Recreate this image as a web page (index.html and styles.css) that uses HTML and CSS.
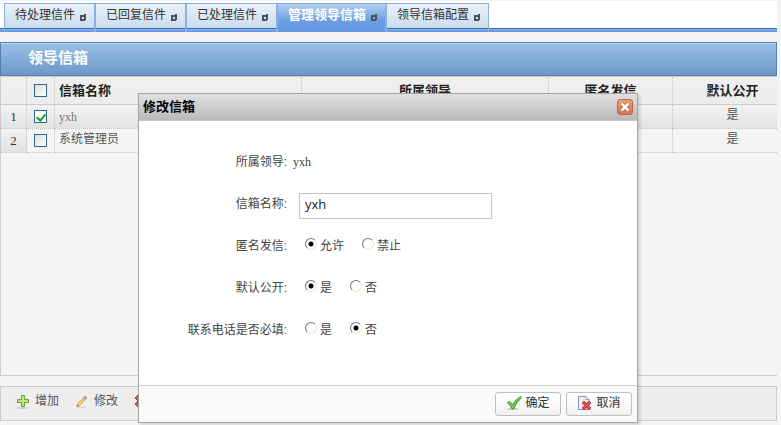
FILE: index.html
```
<!DOCTYPE html>
<html lang="zh-CN">
<head>
	<meta charset="utf-8">
	<title>领导信箱</title>
	<link rel="stylesheet" href="styles.css">
</head>
<body>
<div class="page">
	<nav class="tabs">
		<a href="#" class="tab">待处理信件<svg class="pin" viewBox="0 0 6 7"><path fill-rule="evenodd" d="M0 1h4V0h2v6H5v1H0zM2 3v2h2V3z"/></svg></a>
		<a href="#" class="tab">已回复信件<svg class="pin" viewBox="0 0 6 7"><path fill-rule="evenodd" d="M0 1h4V0h2v6H5v1H0zM2 3v2h2V3z"/></svg></a>
		<a href="#" class="tab">已处理信件<svg class="pin" viewBox="0 0 6 7"><path fill-rule="evenodd" d="M0 1h4V0h2v6H5v1H0zM2 3v2h2V3z"/></svg></a>
		<a href="#" class="tab active">管理领导信箱<svg class="pin" viewBox="0 0 6 7"><path fill-rule="evenodd" d="M0 1h4V0h2v6H5v1H0zM2 3v2h2V3z"/></svg></a>
		<a href="#" class="tab">领导信箱配置<svg class="pin" viewBox="0 0 6 7"><path fill-rule="evenodd" d="M0 1h4V0h2v6H5v1H0zM2 3v2h2V3z"/></svg></a>
	</nav>

	<div class="content">
		<h1 class="panel-title">领导信箱</h1>
		<div class="panel">
			<table class="grid">
				<colgroup>
					<col class="c-num"><col class="c-check"><col class="c-name"><col class="c-leader"><col class="c-anon"><col>
				</colgroup>
				<thead>
					<tr>
						<th></th>
						<th><input type="checkbox" class="check" aria-label="全选"></th>
						<th class="left">信箱名称</th>
						<th>所属领导</th>
						<th>匿名发信</th>
						<th>默认公开</th>
					</tr>
				</thead>
				<tbody>
					<tr class="selected">
						<td class="num">1</td>
						<td><input type="checkbox" class="check" aria-label="选择 yxh" checked></td>
						<td class="left latin">yxh</td>
						<td></td>
						<td></td>
						<td class="cell">是</td>
					</tr>
					<tr>
						<td class="num">2</td>
						<td><input type="checkbox" class="check" aria-label="选择 系统管理员"></td>
						<td class="left cell">系统管理员</td>
						<td></td>
						<td></td>
						<td class="cell">是</td>
					</tr>
				</tbody>
			</table>
		</div>

		<div class="toolbar">
			<button type="button" class="tool">
				<svg class="icon" viewBox="0 0 16 16"><ellipse cx="8" cy="15" rx="6" ry="1" fill="#d0d0d0"/><path d="M6.500 2.500h3v4h4v3h-4v4h-3v-4h-4v-3h4z" fill="#bfe589" stroke="#6aa02f"/></svg>增加</button>
			<button type="button" class="tool">
				<svg class="icon" viewBox="0 0 16 16"><ellipse cx="7" cy="14" rx="5" ry="1" fill="#d8d8d8"/><path d="M3 13.500l1-3.500 5-5 2 2-5.500 5.500z" fill="#f0d468" stroke="#b49a45" stroke-width=".7"/><path d="M3 13.500l1-3.500 2 2z" fill="#e9cfa0"/><path d="M3 13.500l.5-1.700 1.200 1.200z" fill="#333"/><path d="M8 6l1.500-1.500 2 2L10 8z" fill="#b9bcc0"/><path d="M9.500 4.500l1-1q1-.4 1.700.3t.3 1.700l-1 1z" fill="#e8837a" stroke="#cf6a62" stroke-width=".5"/></svg>修改</button>
			<button type="button" class="tool">
				<svg class="icon" viewBox="0 0 16 16"><path d="M2 5l3-3 3 3 3-3 3 3-3 3 3 3-3 3-3-3-3 3-3-3 3-3z" fill="#d9584a" stroke="#9c3a30"/></svg>删除</button>
		</div>
	</div>

	<form class="dialog" role="dialog" aria-labelledby="dialog-title">
		<div class="dialog-head">
			<h2 id="dialog-title">修改信箱</h2>
			<button type="button" class="close" aria-label="关闭">
				<svg viewBox="0 0 14 14"><path d="M3.500 3.500l7 7M10.500 3.500l-7 7" stroke="#a3543a" stroke-width="4"/><path d="M3.500 3.500l7 7M10.500 3.500l-7 7" stroke="#fff" stroke-width="2.600"/></svg>
			</button>
		</div>
		<div class="dialog-body">
			<div class="row">
				<span class="label">所属领导:</span>
				<span class="value">yxh</span>
			</div>
			<div class="row">
				<label class="label" for="name">信箱名称:</label>
				<input type="text" id="name" class="text" value="yxh">
			</div>
			<div class="row" role="radiogroup" aria-labelledby="l-anon">
				<span class="label" id="l-anon">匿名发信:</span>
				<div class="options">
					<label><input type="radio" name="anon" checked>允许</label>
					<label><input type="radio" name="anon">禁止</label>
				</div>
			</div>
			<div class="row" role="radiogroup" aria-labelledby="l-open">
				<span class="label" id="l-open">默认公开:</span>
				<div class="options">
					<label><input type="radio" name="open" checked>是</label>
					<label><input type="radio" name="open">否</label>
				</div>
			</div>
			<div class="row" role="radiogroup" aria-labelledby="l-phone">
				<span class="label" id="l-phone">联系电话是否必填:</span>
				<div class="options">
					<label><input type="radio" name="phone">是</label>
					<label><input type="radio" name="phone" checked>否</label>
				</div>
			</div>
		</div>
		<div class="dialog-foot">
			<button type="button" class="btn">
				<svg class="icon" viewBox="0 0 16 16"><ellipse cx="7" cy="14" rx="6" ry="1" fill="#ccc"/><path d="M1.500 7.500l2.500-1 2.500 3.500q3-5.500 8-8.500l1 1q-5 4.500-8 11.500H6q-1.500-3.500-4.500-6.500z" fill="#6fd44c" stroke="#2f8a2a" stroke-width=".9"/></svg>确定</button>
			<button type="button" class="btn">
				<svg class="icon" viewBox="0 0 16 16"><path d="M1.500 1.500h7.500l3 3v10H1.500z" fill="#edf0f8" stroke="#8d93b5"/><path d="M9 1.500v3h3" fill="#fff" stroke="#8d93b5"/><path d="M5 8l2-2 2.500 2.300L12 6l2 2-2.300 2.500L14 13l-2 2-2.500-2.300L7 15l-2-2 2.300-2.500z" fill="#e04a4a" stroke="#b52f35" stroke-width=".7"/></svg>取消</button>
		</div>
	</form>
</div>
</body>
</html>
```
FILE: styles.css
```
* {
	box-sizing: border-box;
}

body {
	margin: 0;
	min-height: 100vh;
	background: #f4f4f4;
	color: #444;
	font: 12px/16px "Liberation Sans", "Noto Sans CJK SC", sans-serif;
}

button, input {
	font: inherit;
	color: inherit;
}

.page {
	position: relative;
	margin-right: 4px;
}

/* tabs */
.tabs {
	display: flex;
	height: 32px;
	padding: 2px 4px 0;
	border-top: 1px solid #f4f4f4;
	background: linear-gradient(#3565b8 0 1px, #8fb4ec 1px 2px, #659de5 2px) bottom / 100% 4px no-repeat #fff;
}

.tab {
	display: flex;
	padding: 3px 8px 0 10px;
	border: 1px solid #8caee0;
	border-bottom: none;
	background:
		linear-gradient(#3565b8 0 1px, #8fb4ec 1px 2px, #659de5 2px) bottom / 100% 4px no-repeat,
		linear-gradient(#e9f2f9, #c5d9ea);
	color: #333;
	text-decoration: none;
	white-space: nowrap;
}

.tab + .tab {
	border-left-width: 2px;
	margin-left: -1px;
}

.tab.active {
	background: linear-gradient(#b4cff2, #6b9de2 60%, #6298e0);
	color: #fff;
	font-size: 13px;
	font-weight: bold;
}

.pin {
	width: 6px;
	height: 7px;
	margin: 7px 0 0 5px;
	fill: #4a5460;
}

/* grid */
.content {
	padding-top: 10px;
}

.panel-title {
	margin: 0;
	padding: 0 27px;
	height: 34px;
	border: 1px solid #5580b4;
	box-shadow: inset 0 1px #b9d4f0;
	background: linear-gradient(#9ac0e4, #6c99ca);
	color: #fff;
	font-size: 15px;
	line-height: 30px;
}

.panel {
	height: 300px;
	border: 1px solid #ccc;
	border-right: none;
	overflow: hidden;
}

.grid {
	width: calc(100% + 16px);
	table-layout: fixed;
	border-collapse: separate;
	border-spacing: 0;
	text-align: center;
	color: #555;
}

.c-num { width: 26px; }
.c-check { width: 28px; }
.c-name, .c-leader { width: 247px; }
.c-anon { width: 124px; }

.grid th, .grid td {
	height: 24px;
	padding: 0 4px;
	border-right: 1px dotted #c4c4c4;
	border-bottom: 1px dotted #c4c4c4;
}

.grid th {
	height: 28px;
	border-bottom: 1px solid #ccc;
	background: linear-gradient(#f0f0f0, #ececec);
	color: #222;
	font-size: 13px;
}

.grid .left {
	text-align: left;
}

.grid .cell {
	padding-bottom: 3px;
}

.grid .selected td {
	background: linear-gradient(#f3f3f3, #e2e2e2);
}

.grid .num {
	padding: 0;
	background: linear-gradient(#f3f3f3, #e2e2e2);
	color: #333;
	font: 13px/16px "Liberation Serif", serif;
}

.grid .latin {
	font: 12px/16px "Liberation Serif", serif;
	color: #777;
}

.check {
	appearance: none;
	display: block;
	width: 13px;
	height: 13px;
	margin: 0 auto;
	border: 1px solid #33658f;
	background: linear-gradient(135deg, #dcdcd7, #fff);
}

.check:checked {
	background: #fff;
}

.check:checked::before {
	content: "";
	display: block;
	width: 4px;
	height: 7px;
	margin: 1px auto 0;
	border: solid #21a121;
	border-width: 0 2px 2px 0;
	transform: rotate(40deg);
}

/* toolbar */
.toolbar {
	display: flex;
	gap: 15px;
	height: 35px;
	margin-top: 10px;
	padding: 0 14px;
	border: 1px solid #ccc;
	background: #eee;
}

.tool {
	display: flex;
	align-items: center;
	gap: 4px;
	padding: 0 0 5px;
	border: none;
	background: none;
	color: #555;
}

.icon {
	width: 16px;
	height: 16px;
}

/* dialog */
.dialog {
	position: absolute;
	top: 93px;
	left: 0;
	right: 1px;
	width: 500px;
	margin: 0 auto;
	border: 1px solid #a5a5a5;
	background: #fff;
	box-shadow: 2px 2px 3px rgba(0, 0, 0, .15);
}

.dialog-head {
	display: flex;
	justify-content: space-between;
	align-items: center;
	height: 27px;
	padding: 0 4px;
	border-bottom: 1px solid #c8c8c8;
	background: linear-gradient(#e0e0e0, #b9b9b9);
}

.dialog-head h2 {
	margin: 0;
	color: #000;
	font-size: 13px;
}

.close {
	width: 16px;
	height: 16px;
	padding: 0;
	border: 1px solid #b9654a;
	border-radius: 3px;
	background: linear-gradient(#eda077, #d9744e);
}

.close svg {
	display: block;
	width: 14px;
	height: 14px;
}

.dialog-body {
	display: flex;
	flex-direction: column;
	gap: 16px;
	padding: 28px 10px 42px;
	border-bottom: 1px solid #ccc;
}

.row {
	display: flex;
	align-items: center;
	height: 26px;
}

.label {
	width: 138px;
	text-align: right;
}

.value {
	margin-left: 6px;
	font-family: "Liberation Serif", serif;
}

.text {
	width: 193px;
	height: 26px;
	margin: 4px 0 0 12px;
	padding: 0 5px 5px;
	border: 1px solid #c3c3c3;
	font-family: "Open Sans", sans-serif;
	font-size: 13px;
	color: #222;
}

.options {
	display: flex;
	gap: 18px;
	margin-left: 18px;
}

.options label {
	display: flex;
	gap: 3px;
}

.options input {
	appearance: none;
	width: 12px;
	height: 12px;
	margin: 0;
	border: 1px solid;
	border-color: #77776c #e6e6da #e6e6da #77776c;
	border-radius: 50%;
	background: #fff;
}

.options input:checked {
	background: radial-gradient(circle, #000 2px, #fff 3px);
}

.dialog-foot {
	display: flex;
	justify-content: flex-end;
	gap: 5px;
	padding: 6px 5px;
	background: #fafafa;
}

.btn {
	display: flex;
	align-items: center;
	justify-content: center;
	gap: 3px;
	width: 66px;
	height: 24px;
	padding: 0 0 2px;
	border: 1px solid #c0c0c0;
	border-radius: 3px;
	background: linear-gradient(#fff, #f1f1f1);
	color: #333;
}
```
